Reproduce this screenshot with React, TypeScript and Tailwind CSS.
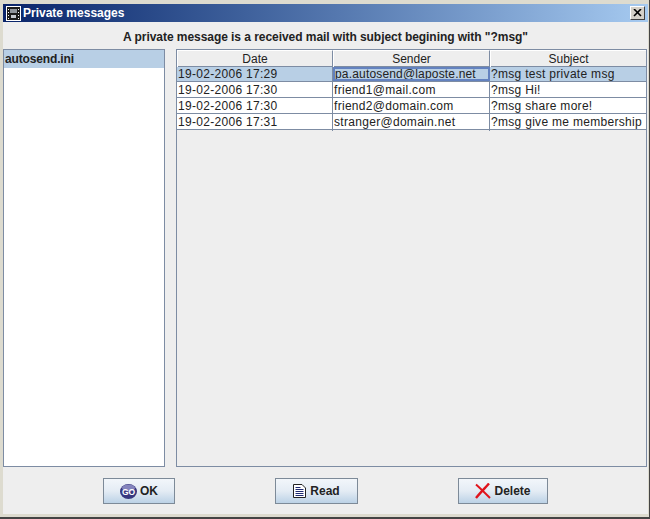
const rows = [
  ["19-02-2006 17:29", "pa.autosend@laposte.net", "?msg test private msg"],
  ["19-02-2006 17:30", "friend1@mail.com", "?msg Hi!"],
  ["19-02-2006 17:30", "friend2@domain.com", "?msg share more!"],
  ["19-02-2006 17:31", "stranger@domain.net", "?msg give me membership"],
];

function Btn({ w, icon, label, gap }: { w: string; icon: React.ReactNode; label: string; gap: string }) {
  return (
    <button className={`${w} h-[26px] flex items-center justify-center ${gap} border border-[#7d8a98] bg-gradient-to-b from-[#f2f6fa] via-[#e4ecf4] to-[#bcd2e6] text-[12px] font-bold text-[#222222]`}>
      {icon}
      <span>{label}</span>
    </button>
  );
}

const GoIcon = (
  <svg width="17" height="15" viewBox="0 0 17 15">
    <ellipse cx="8.5" cy="7.5" rx="8.5" ry="7.5" fill="#38387f" />
    <ellipse cx="8.5" cy="4" rx="6.5" ry="3.5" fill="#8484bd" />
    <text x="8.5" y="10.5" textAnchor="middle" fontSize="8.5" fontWeight="700" fill="#ffffff" fontFamily="Liberation Sans, sans-serif">GO</text>
  </svg>
);

const ReadIcon = (
  <svg width="13" height="14" viewBox="0 0 13 14">
    <path d="M.5 .5H9L12.5 4V13.5H.5Z" fill="#ffffff" stroke="#222222" />
    <path d="M2.5 3.5H7.5M2.5 5.5H10.5M2.5 7.5H10.5M2.5 9.5H10.5M2.5 11.5H10.5" stroke="#1f2a70" />
  </svg>
);

const XIcon = (
  <svg width="16" height="16" viewBox="0 0 16 16">
    <path d="M1 1.5C5 5 10 10 15 15" stroke="#e0141c" strokeWidth="2" fill="none" />
    <path d="M14 .5C10 5 5 10 1 15" stroke="#e0141c" strokeWidth="2.4" fill="none" />
  </svg>
);

export default function App() {
  return (
    <div className="w-[650px] h-[519px] flex flex-col bg-[#dddbcf] pt-[4px] pb-[3px] pl-[3px] pr-[1px] border-r border-b-2 border-[#444444] font-['Liberation_Sans',Arial,sans-serif] text-[#222222]">
      <div className="h-[18px] shrink-0 flex items-center bg-gradient-to-r from-[#0a246a] to-[#a6caf0]">
        <div className="w-[15px] h-[15px] ml-[3px] bg-white flex items-center justify-center">
          <svg width="13" height="13" viewBox="0 0 13 13">
            <path d="M0 0H13V13H0Z" fill="#1c1c1c" />
            <path d="M3 2H10V6H3Z" fill="#8f959c" />
            <path d="M4 8H9V11H4Z" fill="#c4c8ce" />
            <path d="M1 2H2V3H1ZM1 5H2V6H1ZM1 8H2V9H1ZM1 11H2V12H1ZM11 2H12V3H11ZM11 5H12V6H11ZM11 8H12V9H11ZM11 11H12V12H11Z" fill="#ffffff" />
          </svg>
        </div>
        <span className="ml-[2px] text-[12px] font-bold text-white">Private messages</span>
        <div className="ml-auto mr-[3px] w-[15px] h-[14px] bg-[#d4d0c8] border border-t-white border-l-white border-r-[#404040] border-b-[#404040] flex items-center justify-center">
          <svg width="9" height="8" viewBox="0 0 9 8"><path d="M1 0L8 7M8 0L1 7" stroke="#000000" strokeWidth="1.6" /></svg>
        </div>
      </div>
      <div className="flex-1 flex flex-col bg-[#eeeeee] min-h-0">
        <div className="h-[27px] shrink-0 flex items-center justify-center text-[12px] font-bold text-[#222222] tracking-[-0.05px] pt-[3px]">
          A private message is a received mail with subject begining with "?msg"
        </div>
        <div className="h-[418px] shrink-0 flex gap-[11px] pr-[1px]">
          <div className="w-[162px] border border-[#7d8ca3] bg-white">
            <div className="h-[18px] bg-[#b8cfe5] px-[1px] text-[12px] font-bold leading-[18px] tracking-[-0.15px]">autosend.ini</div>
          </div>
          <div className="flex-1 border border-[#7d8ca3] bg-[#eeeeee] text-[12px]">
            <div className="grid grid-cols-[156px_157px_156px] h-[16px] bg-[#eeeeee]">
              <div className="text-center leading-[16px] border-r border-l border-t border-r-[#7d8ca3] border-l-white border-t-white">Date</div>
              <div className="text-center leading-[16px] border-r border-l border-t border-r-[#7d8ca3] border-l-white border-t-white">Sender</div>
              <div className="text-center leading-[16px] border-l border-t border-l-white border-t-white">Subject</div>
            </div>
            {rows.map((r, i) => (
              <div key={i} className={`grid grid-cols-[156px_157px_156px] h-[16px] border-b border-[#7d8ca3] ${i === 0 ? "bg-[#b8cfe5] border-t" : "bg-white"}`}>
                {r.map((c, j) => (
                  <div key={j} className={`${i === 0 && j === 1 ? "px-[2px] outline-2 -outline-offset-2 outline-[#6382bf] tracking-[0.17px]" : "px-[1px] tracking-[0.3px]"} ${i === 0 ? "leading-[14px]" : "leading-[17px]"} whitespace-nowrap ${j < 2 ? "border-r border-[#7d8ca3]" : ""}`}>{c}</div>
                ))}
              </div>
            ))}
          </div>
        </div>
        <div className="flex-1 flex items-start pl-[100px] pt-[11px]">
          <Btn w="w-[72px]" gap="gap-[3px]" icon={GoIcon} label="OK" />
          <div className="w-[100px]" />
          <Btn w="w-[83px]" gap="gap-[4px]" icon={ReadIcon} label="Read" />
          <div className="w-[100px]" />
          <Btn w="w-[90px]" gap="gap-[3px]" icon={XIcon} label="Delete" />
        </div>
      </div>
    </div>
  );
}
